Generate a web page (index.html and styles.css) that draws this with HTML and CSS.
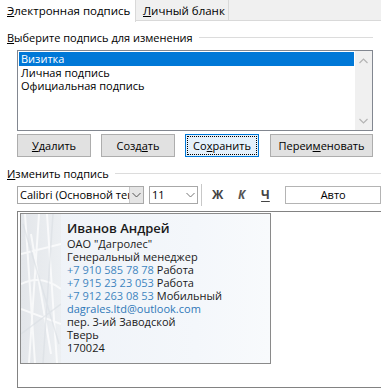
FILE: index.html
```html
<!DOCTYPE html>
<html lang="ru">

<head>
  <meta charset="UTF-8">
  <title>Подписи и бланки</title>
  <link rel="stylesheet" href="styles.css">
</head>

<body>
  <div class="tabs">
    <div class="tab active"><u>Э</u>лектронная подпись</div>
    <div class="tab"><u>Л</u>ичный бланк</div>
  </div>

  <div class="panel">
    <div class="group-title"><span><u>В</u>ыберите подпись для изменения</span><i class="rule"></i></div>

    <div class="listbox">
      <ul class="items">
        <li class="selected">Визитка</li>
        <li>Личная подпись</li>
        <li>Официальная подпись</li>
      </ul>
      <div class="scrollbar">
        <svg width="9" height="6" viewBox="0 0 9 6"><path d="M0.5 5 L4.5 1 L8.5 5" fill="none" stroke="#b4b4b4" stroke-width="1.2"/></svg>
        <svg width="9" height="6" viewBox="0 0 9 6"><path d="M0.5 1 L4.5 5 L8.5 1" fill="none" stroke="#b4b4b4" stroke-width="1.2"/></svg>
      </div>
    </div>

    <div class="buttons">
      <button class="btn"><u>У</u>далить</button>
      <button class="btn">Созд<u>а</u>ть</button>
      <button class="btn focused"><span>Со<u>х</u>ранить</span></button>
      <button class="btn wide">Переи<u>м</u>еновать</button>
    </div>

    <div class="group-title second"><span><u>И</u>зменить подпись</span><i class="rule"></i></div>

    <div class="toolbar">
      <div class="combo font">
        <span class="value">Calibri (Основной текст)</span>
        <span class="drop grey"><svg width="9" height="6" viewBox="0 0 9 6"><path d="M0.5 1 L4.5 5 L8.5 1" fill="none" stroke="#555" stroke-width="1"/></svg></span>
      </div>
      <div class="combo size">
        <span class="value">11</span>
        <span class="drop"><svg width="9" height="6" viewBox="0 0 9 6"><path d="M0.5 1 L4.5 5 L8.5 1" fill="none" stroke="#777" stroke-width="1"/></svg></span>
      </div>
      <i class="sep"></i>
      <span class="fmt bold">Ж</span>
      <span class="fmt italic">К</span>
      <span class="fmt under">Ч</span>
      <div class="color-box">Авто</div>
    </div>

    <div class="editor">
      <div class="card">
        <div class="deco">
          <svg width="40" height="149" viewBox="0 0 40 149">
            <path d="M4 0 L14 149 M18 0 L8 149 M0 40 L40 30 M0 95 L40 110 M26 0 L36 149 M0 70 Q20 60 40 75 M10 20 L30 140" fill="none" stroke="#ffffff" stroke-width="2" opacity="0.7"/>
            <path d="M2 10 L38 130 M0 120 L40 90 M32 0 L22 149" fill="none" stroke="#d8dde2" stroke-width="1.5" opacity="0.6"/>
          </svg>
        </div>
        <div class="sig">
          <div class="name">Иванов Андрей</div>
          <div>ОАО "Дагролес"</div>
          <div>Генеральный менеджер</div>
          <div><span class="phone">+7 910 585 78 78</span> Работа</div>
          <div><span class="phone">+7 915 23 23 053</span> Работа</div>
          <div><span class="phone">+7 912 263 08 53</span> Мобильный</div>
          <div class="mail">dagrales.ltd@outlook.com</div>
          <div>пер. 3-ий Заводской</div>
          <div>Тверь</div>
          <div>170024</div>
        </div>
      </div>
    </div>
  </div>
</body>

</html>
```

FILE: styles.css
```css
* {
  margin: 0;
  padding: 0;
  box-sizing: border-box;
}

body {
  width: 381px;
  height: 388px;
  overflow: hidden;
  background: #fff;
  color: #000;
  font-family: 'Open Sans', 'Noto Sans', sans-serif;
  font-size: 11px;
}

u {
  text-decoration: underline;
  text-underline-offset: 1px;
}

/* вкладки */
.tabs {
  display: flex;
  height: 21px;
  background: #f0f0f0;
  border-bottom: 1px solid #d9d9d9;
}

.tab {
  height: 21px;
  padding: 2px 0 0 7px;
  line-height: 17px;
  white-space: nowrap;
  border-right: 1px solid #d9d9d9;
  width: 93px;
  font-size: 11.5px;
}

.tab.active {
  width: 136px;
  height: 22px;
  background: #fff;
}

.panel {
  padding-left: 7px;
}

.group-title {
  display: flex;
  align-items: center;
  height: 16px;
  margin-top: 8px;
  padding-right: 8px;
  white-space: nowrap;
}

.group-title .rule {
  flex: 1;
  height: 1px;
  background: #dcdcdc;
  margin-left: 6px;
}

.group-title.second {
  margin-top: 8px;
  padding-right: 0;
}

/* список подписей */
.listbox {
  display: flex;
  margin: 5px 8px 0 10px;
  height: 81px;
  border: 1px solid #828790;
  background: #fff;
}

.items {
  flex: 1;
  list-style: none;
  padding: 1px 1px 0 1px;
}

.items li {
  height: 13.5px;
  line-height: 13px;
  padding-left: 2px;
}

.items li.selected {
  background: #0078d7;
  color: #fff;
}

.scrollbar {
  width: 17px;
  background: #f0f0f0;
  display: flex;
  flex-direction: column;
  justify-content: space-between;
  align-items: center;
  padding: 7px 0 6px 0;
}

.scrollbar svg {
  display: block;
}

/* кнопки */
.buttons {
  display: flex;
  gap: 10px;
  margin: 3px 8px 0 10px;
}

.btn {
  width: 74px;
  height: 23px;
  background: #e1e1e1;
  border: 1px solid #adadad;
  font-family: inherit;
  font-size: 11px;
  color: #000;
}

.btn.wide {
  width: 103px;
  margin-left: 1px;
}

.btn.focused {
  background: #e5f1fb;
  border: 1px solid #0078d7;
  padding: 1px;
}

.btn.focused span {
  display: block;
  height: 19px;
  line-height: 17px;
  border: 1px dotted #000;
}

/* панель форматирования */
.toolbar {
  display: flex;
  align-items: center;
  height: 19px;
  margin: 4px 0 0 10px;
}

.combo {
  display: flex;
  height: 18px;
  border: 1px solid #a8a8a8;
  background: #fff;
}

.combo .value {
  flex: 1;
  overflow: hidden;
  white-space: nowrap;
  padding-left: 2px;
  line-height: 15px;
}

.combo .drop {
  width: 14px;
  display: flex;
  align-items: center;
  justify-content: center;
}

.combo .drop.grey {
  background: #e5e5e5;
  border-left: 1px solid #c8c8c8;
}

.combo.font {
  width: 127px;
}

.combo.size {
  width: 51px;
  margin-left: 5px;
}

.combo.size .drop {
  border-left: 1px solid #fff;
}

.sep {
  width: 1px;
  height: 22px;
  background: #c8c8c8;
  margin: 0 4px 0 3px;
}

.fmt {
  width: 25px;
  text-align: center;
  color: #444;
  font-size: 12px;
  font-weight: bold;
  line-height: 18px;
}

.fmt.italic {
  font-style: italic;
  color: #555;
}

.fmt.under {
  text-decoration: underline;
  text-underline-offset: 2px;
}

.color-box {
  width: 100px;
  height: 18px;
  margin-left: 8px;
  border: 1px solid #b4b4b4;
  text-align: center;
  line-height: 16px;
}

/* поле редактирования */
.editor {
  margin: 7px 0 0 10px;
  width: 380px;
  height: 177px;
  border: 1px solid #828282;
  padding: 1px 2px;
}

.card {
  display: flex;
  width: 251px;
  height: 151px;
  border: 1px solid #8a8a8a;
  background: linear-gradient(to right, #eef2f7, #f4f7fb 70%, #f8fafc);
}

.deco {
  width: 40px;
  background: linear-gradient(to right, #e3e6ea, #eceff2);
  overflow: hidden;
}

.deco svg {
  display: block;
}

.sig {
  padding: 6px 0 0 6px;
  font-size: 11px;
  line-height: 13px;
  color: #1a1a1a;
}

.sig .name {
  font-size: 13px;
  font-weight: 600;
  line-height: 16px;
  margin-bottom: 1px;
}

.sig .phone {
  color: #3f86c0;
}

.sig .mail {
  color: #2f78b8;
}
```
